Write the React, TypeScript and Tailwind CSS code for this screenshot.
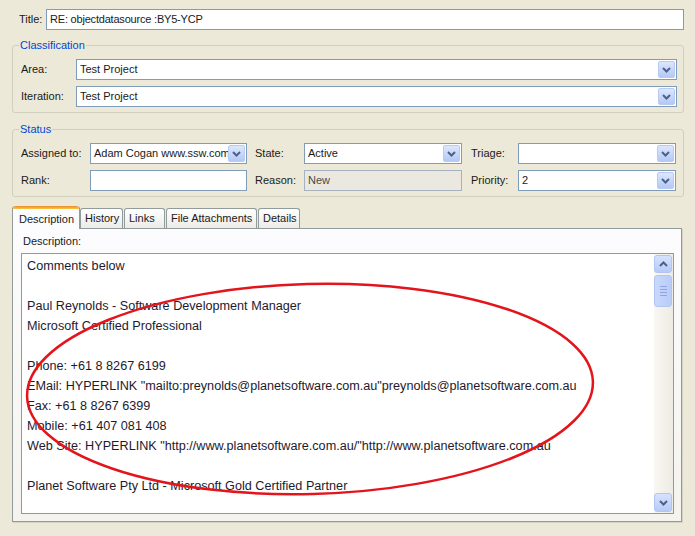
import React from "react";

function Chevron({ up = false }: { up?: boolean }) {
  return (
    <svg width="9" height="6" viewBox="0 0 9 6" className={up ? "rotate-180" : ""}>
      <polyline points="1,1 4.5,4.5 8,1" fill="none" stroke="#4D6185" strokeWidth="2" />
    </svg>
  );
}

function DropButton() {
  return (
    <div className="w-[17px] h-[17px] shrink-0 rounded-[2px] border border-[#B9CBF3] bg-linear-to-b from-[#DCE7FE] to-[#B4C8F6] flex items-center justify-center">
      <Chevron />
    </div>
  );
}

function Combo({ value = "", className = "" }: { value?: string; className?: string }) {
  return (
    <div className={`h-[21px] border border-[#7F9DB9] bg-white flex items-center p-px ${className}`}>
      <span className="flex-1 min-w-0 pl-[2px] whitespace-nowrap overflow-hidden">{value}</span>
      <DropButton />
    </div>
  );
}

function Field({ value = "", disabled = false }: { value?: string; disabled?: boolean }) {
  return (
    <div
      className={`h-[21px] flex items-center pl-[3px] border ${
        disabled ? "bg-[#EBE9DF] border-[#A7B2C0] text-[#4A4A4A]" : "bg-white border-[#7F9DB9]"
      }`}
    >
      {value}
    </div>
  );
}

const lines = [
  "Comments below",
  "",
  "Paul Reynolds - Software Development Manager",
  "Microsoft Certified Professional",
  "",
  "Phone: +61 8 8267 6199",
  'EMail: HYPERLINK "mailto:preynolds@planetsoftware.com.au"preynolds@planetsoftware.com.au',
  "Fax: +61 8 8267 6399",
  "Mobile: +61 407 081 408",
  'Web Site: HYPERLINK "http://www.planetsoftware.com.au/"http://www.planetsoftware.com.au',
  "",
  "Planet Software Pty Ltd - Microsoft Gold Certified Partner",
];

const tabs = [
  { label: "History", w: "w-[43px]", ml: "ml-0" },
  { label: "Links", w: "w-[41px]", ml: "ml-px" },
  { label: "File Attachments", w: "w-[91px]", ml: "ml-px" },
  { label: "Details", w: "w-[42px]", ml: "ml-px" },
];

export default function App() {
  return (
    <div className="relative w-[695px] h-[536px] overflow-hidden bg-[#ECE9D8] font-['Liberation_Sans',Arial,sans-serif] text-[11px] text-[#1A1A1A]">
      {/* title */}
      <div className="flex items-center pt-[9px] pl-[19px]">
        <span className="w-[27px]">Title:</span>
        <div className="w-[638px] h-[21px] border border-[#7F9DB9] bg-white flex items-center pl-[3px] tracking-[-0.2px]">
          RE: objectdatasource :BY5-YCP
        </div>
      </div>

      {/* classification */}
      <fieldset className="mt-[9px] ml-[12px] w-[672px] border border-[#D0D0BF] rounded-[3px] pl-[8px] pr-[6px] pt-[7px] pb-[5px]">
        <legend className="ml-[-2px] px-px leading-[13px] text-[#0046D5]">Classification</legend>
        <div className="flex items-center">
          <span className="w-[55px]">Area:</span>
          <Combo value="Test Project" className="flex-1" />
        </div>
        <div className="flex items-center mt-[6px]">
          <span className="w-[55px]">Iteration:</span>
          <Combo value="Test Project" className="flex-1" />
        </div>
      </fieldset>

      {/* status */}
      <fieldset className="mt-[10px] ml-[12px] w-[672px] border border-[#D0D0BF] rounded-[3px] pl-[8px] pr-[6px] pt-[7px] pb-[5px]">
        <legend className="ml-[-2px] px-px leading-[13px] text-[#0046D5]">Status</legend>
        <div className="grid grid-cols-[69px_157px_57px_158px_56px_158px] items-center gap-y-[6px]">
          <span>Assigned to:</span>
          <Combo value="Adam Cogan www.ssw.com" />
          <span className="pl-[8px]">State:</span>
          <Combo value="Active" />
          <span className="pl-[9px]">Triage:</span>
          <Combo />

          <span>Rank:</span>
          <Field />
          <span className="pl-[8px]">Reason:</span>
          <Field value="New" disabled />
          <span className="pl-[9px]">Priority:</span>
          <Combo value="2" />
        </div>
      </fieldset>

      {/* tabs */}
      <div className="flex items-end mt-[9px] pl-[12px]">
        <div className="relative z-10 w-[68px] h-[23px] -mb-px rounded-t-[3px] border-x border-[#919B9C] bg-[#FCFCFE] flex flex-col">
          <div className="h-[3px] rounded-t-[3px] bg-linear-to-b from-[#E68B2C] to-[#FFC73C]" />
          <div className="flex-1 flex items-center pl-[6px]">Description</div>
        </div>
        {tabs.map((t) => (
          <div
            key={t.label}
            className={`${t.w} ${t.ml} h-[20px] rounded-t-[3px] border border-b-0 border-[#919B9C] bg-linear-to-b from-white to-[#ECEBE6] flex items-center pl-[4px]`}
          >
            {t.label}
          </div>
        ))}
      </div>

      {/* tab panel */}
      <div className="ml-[12px] w-[670px] h-[294px] border border-[#919B9C] bg-linear-to-b from-[#FCFCFE] to-[#F4F3EE] shadow-[1px_1px_0_#D5D2C4] pt-[6px] pl-[8px] pr-[7px]">
        <div className="pl-[2px] h-[13px] leading-[13px]">Description:</div>
        <div className="mt-[5px] h-[261px] border border-[#7F9DB9] bg-white flex">
          <div className="flex-1 min-w-0 pl-[5px] pt-[2px] text-[12.65px] leading-[20px] text-[#1E1A2E] whitespace-nowrap overflow-hidden">
            {lines.map((l, i) => (
              <div key={i} className="h-[20px]">
                {l}
              </div>
            ))}
          </div>
          <div className="w-[19px] py-px pr-px flex flex-col bg-linear-to-r from-[#F8F7F2] to-[#EDEBE3]">
            <div className="h-[18px] rounded-[3px] border border-[#B2C5F2] bg-linear-to-b from-[#D6E2FE] to-[#B7CAF7] flex items-center justify-center">
              <Chevron up />
            </div>
            <div className="mt-[2px] h-[32px] rounded-[3px] border border-[#B2C5F2] bg-linear-to-r from-[#C9D8FC] to-[#B9CCF8] flex flex-col items-center justify-center gap-[2px]">
              <div className="w-[7px] h-px bg-[#8EA5E2]" />
              <div className="w-[7px] h-px bg-[#8EA5E2]" />
              <div className="w-[7px] h-px bg-[#8EA5E2]" />
              <div className="w-[7px] h-px bg-[#8EA5E2]" />
            </div>
            <div className="flex-1" />
            <div className="h-[19px] rounded-[3px] border border-[#B2C5F2] bg-linear-to-b from-[#D6E2FE] to-[#B7CAF7] flex items-center justify-center">
              <Chevron />
            </div>
          </div>
        </div>
      </div>

      {/* hand-drawn red ring */}
      <svg className="absolute inset-0 pointer-events-none" width="695" height="536" viewBox="0 0 695 536">
        <ellipse
          cx="310"
          cy="389"
          rx="283"
          ry="105"
          transform="rotate(-1.5 310 389)"
          fill="none"
          stroke="#E3141C"
          strokeWidth="2.5"
        />
      </svg>
    </div>
  );
}
